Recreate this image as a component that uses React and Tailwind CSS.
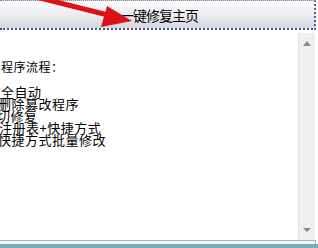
import React from 'react';

const steps = [
  { text: '全自动', shift: 'ml-0' },
  { text: '删除篡改程序', shift: '-ml-[3px]' },
  { text: '切修复', shift: '-ml-[4px]' },
  { text: '注册表+快捷方式', shift: '-ml-[2px]' },
  { text: '快捷方式批量修改', shift: '-ml-[3px]' },
];

const App = () => {
  return (
    <div
      className="relative w-[318px] h-[248px] overflow-hidden bg-white flex flex-col"
      style={{ fontFamily: '"SimSun", "Noto Sans CJK SC", sans-serif' }}
    >
      {/* Button */}
      <div className="w-[316px] h-[30px] shrink-0 border-t border-dotted border-t-[#8a8a8a] border-r-2 border-r-[#4d6494] border-b-2 border-b-[#3f5688] bg-gradient-to-b from-[#fbfbfd] via-[#ececf1] to-[#d5d6e0] flex items-center justify-center pl-1">
        <span className="text-[14px] leading-none tracking-[-1px] text-black">一键修复主页</span>
      </div>

      {/* Content */}
      <div className="flex flex-1 min-h-0 pt-[3px]">
        <div className="flex-1 pt-[27px] pl-[1px] text-black">
          <div className="text-[12px] leading-[14px] tracking-[0.5px]">程序流程：</div>
          <div className="mt-[12px] text-[13px] leading-[12px] tracking-[0.5px]">
            {steps.map((s) => (
              <div key={s.text} className={`${s.shift} whitespace-nowrap`}>
                {s.text}
              </div>
            ))}
          </div>
        </div>
        <div className="w-[17px] mr-[3px] bg-[#efefef] border-l border-[#e2e2e2] flex flex-col items-center justify-between py-[8px]">
          <svg width="8" height="5" viewBox="0 0 8 5">
            <path d="M4 0 L8 5 L0 5 Z" fill="#8a8a8a" />
          </svg>
          <svg width="8" height="4" viewBox="0 0 8 4">
            <path d="M0 0 L8 0 L4 4 Z" fill="#8a8a8a" />
          </svg>
        </div>
      </div>

      {/* Bottom edge */}
      <div className="shrink-0 h-[8px] flex flex-col">
        <div className="h-[1px] w-[316px] bg-[#b4b4b4]" />
        <div className="h-[3px] w-[316px] bg-[#eef3f5] border-r border-[#b4b4b4]" />
        <div className="flex-1 bg-[#74aebd]" />
      </div>

      {/* Red arrow */}
      <svg className="absolute left-0 top-0" width="140" height="32" viewBox="0 0 140 32">
        <line x1="36" y1="-3" x2="112" y2="16" stroke="#dc1218" strokeWidth="5" strokeLinecap="round" />
        <path d="M107 6 L132 21 L101 27 Z" fill="#dc1218" />
      </svg>
    </div>
  );
};

export default App;
